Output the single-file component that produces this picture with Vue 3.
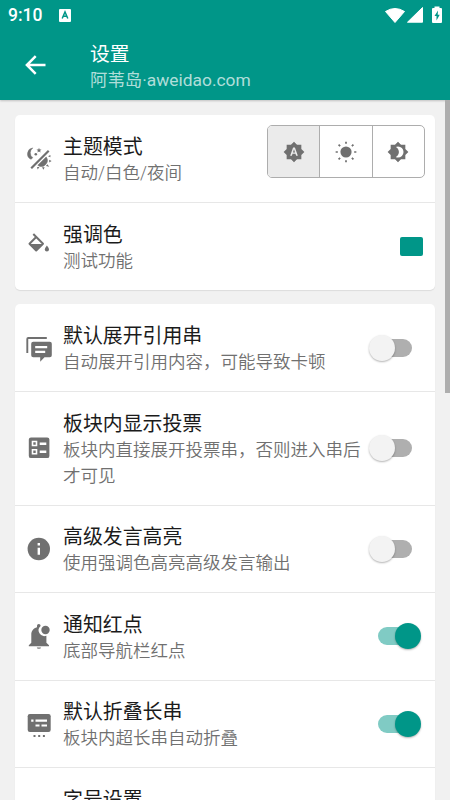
<script setup>
import { ref } from 'vue'

const modes = ['auto', 'light', 'dark']
const mode = ref('auto')

const rows = ref([
  { icon: 'quote', title: '默认展开引用串', note: '自动展开引用内容，可能导致卡顿', on: false },
  { icon: 'poll', title: '板块内显示投票', note: '板块内直接展开投票串，否则进入串后才可见', on: false },
  { icon: 'info', title: '高级发言高亮', note: '使用强调色高亮高级发言输出', on: false },
  { icon: 'bell', title: '通知红点', note: '底部导航栏红点', on: true },
  { icon: 'fold', title: '默认折叠长串', note: '板块内超长串自动折叠', on: true },
])
</script>

<template>
  <div class="screen">
    <header class="appbar">
      <div class="status">
        <span class="clock">9:10</span>
        <svg class="ime" viewBox="0 0 12 13"><rect width="12" height="13" rx="1" fill="#fff" /><path d="M3.2 9.5 6 3 8.8 9.5M4.4 7.3H7.6" fill="none" stroke="#009688" stroke-width="1.5" /></svg>
        <svg class="signals" viewBox="0 0 60 20">
          <path d="M.5 6.5Q10 .5 19.5 6.5L10 17.5Z" fill="#fff" stroke="#fff" stroke-linejoin="round" />
          <path d="M22.5 17.2 37.5 2.5V17.2Z" fill="#fff" stroke="#fff" stroke-linejoin="round" />
          <path d="M49.5 1.5H54.5V3H56A1 1 0 0 1 57 4V17A1 1 0 0 1 56 18H48A1 1 0 0 1 47 17V4A1 1 0 0 1 48 3H49.5Z" fill="#fff" />
          <path d="M53 5.5 49.5 11H51.5V15.5L54.7 9.7H52.7Z" fill="#009688" />
        </svg>
      </div>
      <div class="toolbar">
        <svg class="back" viewBox="0 0 22 20"><path d="M20.5 10H2.5M10.7 1.2 1.9 10 10.7 18.8" fill="none" stroke="#fff" stroke-width="2.5" /></svg>
        <div class="heading">
          <h1>设置</h1>
          <p>阿苇岛·aweidao.com</p>
        </div>
      </div>
    </header>

    <main class="body">
      <section class="card">
        <div class="row">
          <svg class="icon" viewBox="0 0 28 28">
            <path d="M7.8 2.9A6 6 0 0 0 6 14.3L7.8 12.7A6 6 0 0 1 7.8 2.9Z" stroke="#707070" stroke-width=".5" />
            <path d="M14 2.7 14.7 4.4 16.5 4.5 15.1 5.7 15.6 7.4 14 6.5 12.4 7.4 12.9 5.7 11.5 4.5 13.3 4.4Z" />
            <circle cx="10.8" cy="9.2" r="1.3" />
            <path d="M6.2 23.3 23.7 5.8" fill="none" stroke="#707070" stroke-width="2.2" />
            <path d="M12.8 20.3 21.2 12A6 6 0 0 1 12.8 20.3Z" stroke="#707070" stroke-width=".6" />
            <path d="M23 11.2 25.4 10V12.3ZM24.2 14.8 26.6 16.1 24.2 17.4ZM22.3 19.3 24.3 21.7 21 21ZM17 22.2H19.7L18.4 24.7ZM12 22H14.4L12.7 24.4Z" />
          </svg>
          <div class="copy">
            <h2>主题模式</h2>
            <p>自动/白色/夜间</p>
          </div>
          <div class="segments">
            <button v-for="m in modes" :key="m" :class="{ active: mode === m }" @click="mode = m">
              <svg viewBox="0 0 24 24">
                <path v-if="m === 'auto'" d="M14.3,16L13.6,14H10.4L9.7,16H7.8L11,7H13L16.2,16H14.3M20,8.69V4H15.31L12,0.69L8.69,4H4V8.69L0.69,12L4,15.31V20H8.69L12,23.31L15.31,20H20V15.31L23.31,12L20,8.69M10.85,12.65H13.15L12,9L10.85,12.65Z" />
                <g v-else-if="m === 'light'">
                  <circle cx="12" cy="12" r="6.1" />
                  <path d="M12 .7V3.1M12 20.9V23.3M.7 12H3.1M20.9 12H23.3M3.9 3.9 5.6 5.6M18.4 18.4 20.1 20.1M3.9 20.1 5.6 18.4M18.4 5.6 20.1 3.9" fill="none" stroke="#707070" stroke-width="1.9" />
                </g>
                <path v-else d="M12,18C11.11,18 10.26,17.8 9.5,17.45C11.56,16.5 13,14.42 13,12C13,9.58 11.56,7.5 9.5,6.55C10.26,6.2 11.11,6 12,6A6,6 0 0,1 18,12A6,6 0 0,1 12,18M20,8.69V4H15.31L12,0.69L8.69,4H4V8.69L0.69,12L4,15.31V20H8.69L12,23.31L15.31,20H20V15.31L23.31,12L20,8.69Z" />
              </svg>
            </button>
          </div>
        </div>
        <div class="row">
          <svg class="icon raised" viewBox="0 0 28 28">
            <path d="M8.3 3 18 12.7 11.2 19.5 4.5 12.7 11.2 6" fill="none" stroke="#707070" stroke-width="2" stroke-linejoin="round" />
            <path d="M4.3 12.9H18.1L11.2 19.8Z" />
            <path d="M21.9 14.5Q24 17.1 24 18.5A2.1 2.1 0 0 1 19.8 18.5Q19.8 17.1 21.9 14.5Z" />
          </svg>
          <div class="copy">
            <h2>强调色</h2>
            <p>测试功能</p>
          </div>
          <span class="swatch"></span>
        </div>
      </section>

      <section class="card">
        <div v-for="r in rows" :key="r.title" class="row">
          <svg class="icon" viewBox="0 0 28 28">
            <g v-if="r.icon === 'quote'">
              <path d="M2.3 19V4.9Q2.3 4 3.2 4H21.8" fill="none" stroke="#707070" stroke-width="1.9" />
              <path d="M8.2 7.8H24.8A2 2 0 0 1 26.8 9.8V21.3A2 2 0 0 1 24.8 23.3H19.5L15.2 27.8V23.3H8.2A2 2 0 0 1 6.2 21.3V9.8A2 2 0 0 1 8.2 7.8Z" />
              <path d="M10.2 13.1H22.2M10.2 17.9H20.2" stroke="#fff" stroke-width="2.1" />
            </g>
            <g v-else-if="r.icon === 'poll'">
              <rect x="3.8" y="3.5" width="20.6" height="20.6" rx="2.2" />
              <path d="M14.7 9.7H21.3M14.7 17.7H21.3" stroke="#fff" stroke-width="2.5" />
              <path d="M7.5 7.5H11.5V11.5H7.5ZM7.5 15.7H11.5V19.7H7.5Z" fill="none" stroke="#fff" stroke-width="1.6" />
            </g>
            <g v-else-if="r.icon === 'info'">
              <circle cx="13.8" cy="14" r="11.2" />
              <path d="M13.8 8V10.4M13.8 12.7V19.8" stroke="#fff" stroke-width="2.4" />
            </g>
            <g v-else-if="r.icon === 'bell'">
              <path d="M15.6 4V3.8A1.8 1.8 0 0 0 12 3.8V5.2C8.4 6.2 6.3 9.1 6.3 12.4V20.7L3.8 23.2V24.3H24V23.2L21.4 20.7V13.8A5.8 5.8 0 0 1 15.6 4Z" />
              <circle cx="20.5" cy="8" r="4.2" />
              <path d="M11.8 25.4H16A2.1 1.4 0 0 1 11.8 25.4Z" />
            </g>
            <g v-else>
              <rect x="2.7" y="4" width="23" height="18" rx="2.2" />
              <path d="M6.2 10.7H8.5M10.5 10.7H22M10.5 15.5H14.5M16.5 15.5H22" stroke="#fff" stroke-width="2.2" />
              <path d="M8.5 26H10.5M13.2 26H15.2M17.9 26H19.9" stroke="#707070" stroke-width="2" />
            </g>
          </svg>
          <div class="copy">
            <h2>{{ r.title }}</h2>
            <p>{{ r.note }}</p>
          </div>
          <button class="switch" :class="{ on: r.on }" @click="r.on = !r.on"><span></span></button>
        </div>
        <div class="row last">
          <span class="icon"></span>
          <div class="copy">
            <h2>字号设置</h2>
          </div>
        </div>
      </section>
      <div class="scrollbar"></div>
    </main>
  </div>
</template>

<style>
body { margin: 0; overflow: hidden; }
</style>

<style scoped>
* { box-sizing: border-box; }
.screen {
  width: 450px;
  height: 800px;
  overflow: hidden;
  display: flex;
  flex-direction: column;
  background: #f1f1f1;
  font-family: Roboto, "Noto Sans CJK SC", sans-serif;
}
h1, h2, p { margin: 0; font-weight: 400; }
button { border: 0; padding: 0; background: none; }
.appbar {
  flex: none;
  height: 100px;
  background: #009688;
  color: #fff;
  position: relative;
  box-shadow: 0 1px 2px rgba(0, 0, 0, .2);
}
.status { display: flex; align-items: center; height: 31px; padding: 0 5px 0 8px; }
.clock { font-size: 17.5px; font-weight: 500; line-height: 31px; width: 51px; }
.ime { width: 12px; height: 13px; }
.signals { width: 60px; height: 20px; margin-left: auto; margin-top: -1px; }
.toolbar { display: flex; align-items: center; height: 69px; padding: 0 0 2px 25px; }
.back { width: 22px; height: 20px; margin-right: 43px; }
.heading { padding-top: 5px; }
.toolbar h1 { font-size: 19.8px; line-height: 26px; }
.toolbar p { font-size: 17.4px; line-height: 25px; color: rgba(255, 255, 255, .7); }
.body { flex: 1; min-height: 0; position: relative; padding: 15px 15px 0; overflow: hidden; }
.card {
  background: #fff;
  border-radius: 5px;
  box-shadow: 0 1px 1px rgba(0, 0, 0, .09);
  margin-bottom: 14.5px;
}
.row { display: flex; align-items: center; min-height: 87px; padding: 15px 10px; }
.row + .row { border-top: 1px solid #e7e7e7; min-height: 87.5px; padding: 14.75px 10px; }
.row.last { align-items: flex-start; }
.icon { flex: none; width: 28px; height: 28px; fill: #707070; margin-right: 10px; }
.raised { margin-top: -3px; }
.copy { flex: none; width: 300px; padding-top: 5px; margin-bottom: 1px; }
.copy h2 { font-size: 19.9px; line-height: 25px; color: #1b1b1b; }
.copy p { font-size: 17.5px; line-height: 26px; color: #707070; font-weight: 350; }
.segments {
  flex: none;
  display: flex;
  width: 158px;
  height: 53px;
  margin-left: -96px;
  margin-top: -14px;
  border: 1px solid #adadad;
  border-radius: 5px;
  overflow: hidden;
}
.segments button { flex: 1; display: flex; align-items: center; justify-content: center; }
.segments button + button { border-left: 1px solid #adadad; }
.segments .active { background: #ebebeb; }
.segments svg { width: 22px; height: 22px; fill: #707070; }
.swatch { width: 23px; height: 19px; border-radius: 2px; background: #009688; margin-left: 37px; }
.switch {
  flex: none;
  display: flex;
  align-items: center;
  width: 34px;
  height: 18px;
  border-radius: 9px;
  background: #afafaf;
  margin-left: 15px;
}
.switch span {
  flex: none;
  width: 26px;
  height: 26px;
  border-radius: 50%;
  margin-left: -9px;
  background: #f3f3f3;
  box-shadow: 0 1px 2px rgba(0, 0, 0, .3);
}
.switch.on { background: #80cbc4; }
.switch.on span { background: #009688; margin-left: 17px; }
.scrollbar { position: absolute; right: 0; top: 0; width: 5px; height: 293px; background: #aeaeae; }
</style>
